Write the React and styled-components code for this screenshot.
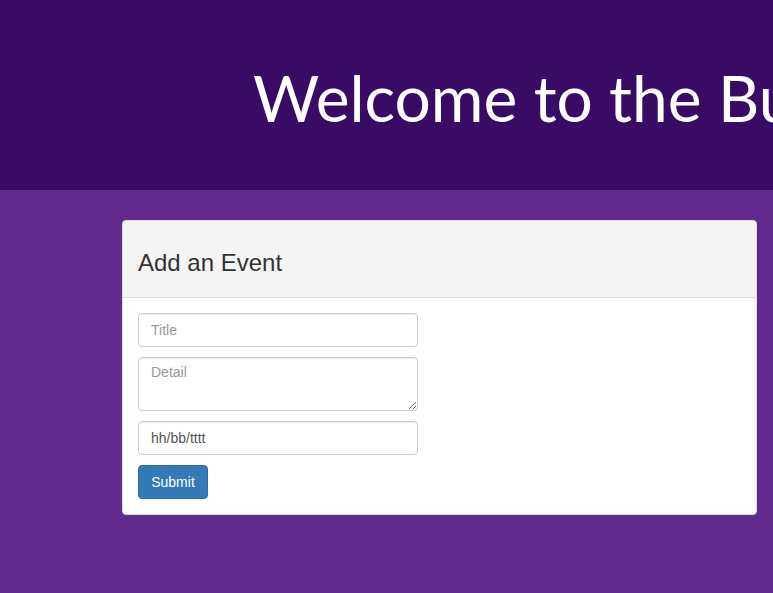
import React from 'react';
import styled, { createGlobalStyle } from 'styled-components';

const GlobalStyle = createGlobalStyle`
  html, body {
    margin: 0;
    padding: 0;
    background-color: #622a8c;
    font-family: "Liberation Sans", Arial, sans-serif;
    font-size: 14px;
    color: #333;
    overflow: hidden;
  }
`;

const Page = styled.div`
  width: 773px;
  height: 593px;
  background-color: #622a8c;
  overflow: hidden;
`;

const Banner = styled.header`
  height: 190px;
  background-color: #380b64;
  padding-left: 253px;
  box-sizing: border-box;
  white-space: nowrap;
  overflow: hidden;

  h1 {
    margin: 0;
    padding-top: 62px;
    font-family: Lato, "Open Sans", sans-serif;
    font-weight: 400;
    font-size: 64px;
    line-height: 72px;
    color: #fff;
  }
`;

const Content = styled.main`
  padding: 30px 16px 0 122px;
`;

const Panel = styled.section`
  background-color: #fff;
  border: 1px solid #ddd;
  border-radius: 4px;
  overflow: hidden;
`;

const PanelHeading = styled.div`
  background-color: #f5f5f5;
  border-bottom: 1px solid #ddd;
  height: 76px;
  padding: 0 15px;
  display: flex;
  align-items: center;

  h3 {
    margin: 8px 0 0;
    font-size: 24px;
    font-weight: 400;
    color: #333;
  }
`;

const PanelBody = styled.form`
  padding: 15px;
  display: flex;
  flex-direction: column;
  gap: 10px;
`;

const Field = styled.input`
  width: 280px;
  height: 34px;
  box-sizing: border-box;
  padding: 6px 12px;
  font-family: inherit;
  font-size: 14px;
  color: #555;
  border: 1px solid #ccc;
  border-radius: 4px;
  box-shadow: inset 0 1px 1px rgba(0, 0, 0, 0.075);
  outline: none;

  &::placeholder {
    color: #999;
  }
`;

const Area = styled(Field).attrs({ as: 'textarea' })`
  height: 54px;
  resize: vertical;
`;

const Button = styled.button`
  align-self: flex-start;
  width: 70px;
  height: 34px;
  font-family: inherit;
  font-size: 14px;
  color: #fff;
  background-color: #337ab7;
  border: 1px solid #2e6da4;
  border-radius: 4px;
  cursor: pointer;
`;

export default function App() {
  return (
    <Page>
      <GlobalStyle />
      <Banner>
        <h1>Welcome to the Bulletin Board</h1>
      </Banner>
      <Content>
        <Panel>
          <PanelHeading>
            <h3>Add an Event</h3>
          </PanelHeading>
          <PanelBody onSubmit={e => e.preventDefault()}>
            <Field type="text" placeholder="Title" />
            <Area placeholder="Detail" />
            <Field type="text" defaultValue="hh/bb/tttt" />
            <Button type="submit">Submit</Button>
          </PanelBody>
        </Panel>
      </Content>
    </Page>
  );
}
